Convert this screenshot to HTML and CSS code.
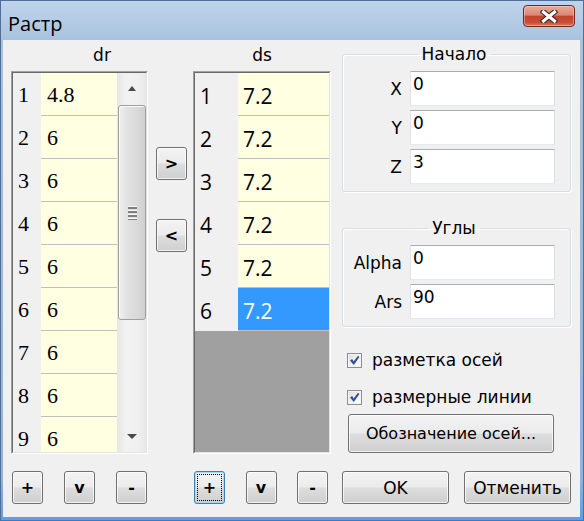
FILE: index.html
```html
<!DOCTYPE html>
<html lang="ru">
<head>
<meta charset="utf-8">
<title>Растр</title>
<link rel="stylesheet" href="styles.css">
</head>
<body>
<div class="window">
  <div class="titlebar">
    <span class="title">Растр</span>
    <button class="close" aria-label="Закрыть">
      <svg width="18" height="13" viewBox="0 0 18 13">
        <path d="M3.5 2 L14.5 11 M14.5 2 L3.5 11" stroke="#3c2420" stroke-width="5.4" stroke-linecap="square" fill="none"/>
        <path d="M3.5 2 L14.5 11 M14.5 2 L3.5 11" stroke="#ffffff" stroke-width="3.2" stroke-linecap="square" fill="none"/>
      </svg>
    </button>
  </div>
  <div class="client">
    <section class="col col-dr">
      <div class="col-head head-dr">dr</div>
      <div class="table">
        <div class="table-in">
          <div class="rows rows-dr">
            <div class="row"><span class="num">1</span><span class="val">4.8</span></div>
            <div class="row"><span class="num">2</span><span class="val">6</span></div>
            <div class="row"><span class="num">3</span><span class="val">6</span></div>
            <div class="row"><span class="num">4</span><span class="val">6</span></div>
            <div class="row"><span class="num">5</span><span class="val">6</span></div>
            <div class="row"><span class="num">6</span><span class="val">6</span></div>
            <div class="row"><span class="num">7</span><span class="val">6</span></div>
            <div class="row"><span class="num">8</span><span class="val">6</span></div>
            <div class="row row-last"><span class="num">9</span><span class="val">6</span></div>
          </div>
          <div class="scrollbar">
            <div class="sb-btn"><span class="arrow-up"></span></div>
            <div class="sb-track">
              <div class="thumb"><span class="grip"></span></div>
            </div>
            <div class="sb-btn"><span class="arrow-down"></span></div>
          </div>
        </div>
      </div>
      <div class="btn-row btn-row-dr">
        <button class="btn sm">+</button>
        <button class="btn sm">v</button>
        <button class="btn sm">-</button>
      </div>
    </section>

    <div class="mid">
      <button class="btn sm">&gt;</button>
      <button class="btn sm">&lt;</button>
    </div>

    <section class="col col-ds">
      <div class="col-head">ds</div>
      <div class="table">
        <div class="table-in">
          <div class="rows rows-ds">
            <div class="row"><span class="num">1</span><span class="val">7.2</span></div>
            <div class="row"><span class="num">2</span><span class="val">7.2</span></div>
            <div class="row"><span class="num">3</span><span class="val">7.2</span></div>
            <div class="row"><span class="num">4</span><span class="val">7.2</span></div>
            <div class="row"><span class="num">5</span><span class="val">7.2</span></div>
            <div class="row sel"><span class="num">6</span><span class="val">7.2</span></div>
          </div>
        </div>
      </div>
      <div class="btn-row btn-row-ds">
        <button class="btn sm focus">+</button>
        <button class="btn sm">v</button>
        <button class="btn sm">-</button>
      </div>
    </section>

    <div class="side">
      <fieldset class="group">
        <legend>Начало</legend>
        <div class="form">
          <label>X</label><input type="text" value="0">
          <label>Y</label><input type="text" value="0">
          <label>Z</label><input type="text" value="3">
        </div>
      </fieldset>
      <fieldset class="group group-angles">
        <legend>Углы</legend>
        <div class="form">
          <label>Alpha</label><input type="text" value="0">
          <label>Ars</label><input type="text" value="90">
        </div>
      </fieldset>
      <label class="check check-1"><span class="box"><svg width="11" height="11" viewBox="0 0 11 11"><path d="M1 5.6 L3.2 4 L4.6 6.4 L9 0.8 L10.4 2 L4.8 10 Z" fill="#2f4f9a"/></svg></span>разметка осей</label>
      <label class="check check-2"><span class="box"><svg width="11" height="11" viewBox="0 0 11 11"><path d="M1 5.6 L3.2 4 L4.6 6.4 L9 0.8 L10.4 2 L4.8 10 Z" fill="#2f4f9a"/></svg></span>размерные линии</label>
      <button class="btn axes">Обозначение осей...</button>
      <div class="ok-row">
        <button class="btn big">OK</button>
        <button class="btn big">Отменить</button>
      </div>
    </div>
  </div>
</div>
</body>
</html>
```

FILE: styles.css
```css
* { box-sizing: border-box; }
html, body { margin: 0; padding: 0; }
body {
  width: 584px;
  height: 521px;
  overflow: hidden;
  font-family: "DejaVu Sans", sans-serif;
  font-size: 17px;
  color: #000;
  background: #a6c0dc;
}
.window {
  width: 584px;
  height: 521px;
  display: flex;
  flex-direction: column;
  border: 1px solid #4f6f96;
  border-bottom-color: #2f7fd0;
  background: linear-gradient(to bottom, #bed4eb 0, #a8c2de 40px, #8fb3de 92%, #5f9ee0 100%);
}
.titlebar {
  height: 39px;
  flex: none;
  display: flex;
  justify-content: space-between;
  align-items: flex-start;
  padding-left: 7px;
}
.title {
  font-family: "Open Sans", sans-serif;
  font-size: 20px;
  line-height: 27px;
  padding-top: 9px;
  color: #000;
}
.close {
  width: 52px;
  height: 22px;
  margin-top: 4px;
  margin-right: 8px;
  padding: 0;
  border: 1px solid #6e2a1e;
  border-radius: 4px;
  background: linear-gradient(to bottom, #e9ab9b 0%, #dc8672 45%, #c5432b 52%, #c84c33 80%, #d8745e 100%);
  box-shadow: inset 0 0 0 1px rgba(255, 220, 210, 0.45);
  display: flex;
  align-items: center;
  justify-content: center;
}
.close svg { display: block; }

.client {
  flex: 1;
  margin: 0 3px 3px 2px;
  background: #f0f0f0;
  display: flex;
  padding: 0 9px 13px 8px;
}

.col { display: flex; flex-direction: column; }
.col-dr { width: 137px; }
.col-ds { width: 138px; }
.col-head {
  height: 31px;
  line-height: 31px;
  text-align: center;
}
.head-dr { padding-left: 45px; }

.table {
  height: 383px;
  border: 1px solid;
  border-color: #a0a0a0 #ffffff #ffffff #a0a0a0;
}
.table-in {
  height: 100%;
  border: 1px solid;
  border-color: #696969 #e3e3e3 #e3e3e3 #696969;
  display: flex;
  overflow: hidden;
}
.rows { display: flex; flex-direction: column; flex: none; }
.rows-dr { width: 104px; }
.rows-ds { width: 134px; background: #a0a0a0; }
.row { display: flex; height: 43px; flex: none; }
.row-last { height: 36px; }
.num {
  background: #f0f0f0;
  height: 43px;
}
.val {
  flex: 1;
  background: #ffffe1;
  border-bottom: 1px solid #c0c0c0;
  height: 43px;
}
.row-last .num, .row-last .val { height: 36px; border-bottom: 0; }
.rows-dr .num {
  width: 28px;
  font-family: "Liberation Serif", serif;
  font-size: 22px;
  line-height: 40px;
  padding: 2px 0 0 5px;
}
.rows-dr .val {
  font-family: "Liberation Serif", serif;
  font-size: 22px;
  line-height: 40px;
  padding: 2px 0 0 6px;
}
.rows-ds .num {
  width: 43px;
  font-family: "Open Sans", sans-serif;
  font-size: 21px;
  line-height: 40px;
  padding: 3px 0 0 5px;
}
.rows-ds .val {
  font-family: "Open Sans", sans-serif;
  font-size: 21px;
  line-height: 40px;
  padding: 3px 0 0 5px;
}
.row.sel .val { background: #3399ff; color: #fff; }

.scrollbar {
  width: 29px;
  flex: none;
  display: flex;
  flex-direction: column;
  background: linear-gradient(to right, #e6e6e6, #f2f2f2 30%, #f0f0f0 70%, #e8e8e8);
}
.sb-btn {
  height: 31px;
  flex: none;
  display: flex;
  align-items: center;
  justify-content: center;
}
.arrow-up {
  width: 0; height: 0;
  border-left: 4.5px solid transparent;
  border-right: 4.5px solid transparent;
  border-bottom: 5px solid #4a4a4a;
}
.arrow-down {
  width: 0; height: 0;
  border-left: 5px solid transparent;
  border-right: 5px solid transparent;
  border-top: 5px solid #4a4a4a;
}
.sb-track { flex: 1; padding-top: 1px; }
.thumb {
  height: 215px;
  margin-left: 1px;
  border: 1px solid #9f9f9f;
  border-radius: 3px;
  background: linear-gradient(to right, #f0f0f0 0, #e2e2e2 30%, #d9d9d9 70%, #cfcfcf 100%);
  box-shadow: inset 1px 1px 0 #fafafa;
  display: flex;
  align-items: center;
  justify-content: center;
}
.grip {
  width: 9px;
  height: 14px;
  background: repeating-linear-gradient(to bottom, #f8f8f8 0 1px, #7f7f7f 1px 3px, transparent 3px 4px);
}

.btn-row {
  margin-top: auto;
  height: 33px;
  display: flex;
  justify-content: space-between;
}
.btn-row-dr { padding: 0 1px; }
.btn-row-ds { padding: 0 3px 0 1px; }

.btn {
  font-family: "DejaVu Sans", sans-serif;
  font-size: 17px;
  color: #000;
  border: 1px solid #707070;
  border-radius: 3px;
  background: linear-gradient(to bottom, #f3f3f3 0%, #ebebeb 48%, #dddddd 52%, #cfcfcf 100%);
  box-shadow: inset 0 0 0 1px rgba(255, 255, 255, 0.75);
  padding: 0;
  cursor: default;
}
.btn.sm {
  width: 31px;
  height: 33px;
  font-weight: bold;
  font-size: 16px;
}
.btn.focus {
  border-color: #3c7fb1;
  box-shadow: inset 0 0 0 1px #a7d8f5;
  outline: 1px dotted #000;
  outline-offset: -4px;
}

.mid {
  width: 45px;
  display: flex;
  flex-direction: column;
  padding: 107px 0 0 8px;
  gap: 39px;
}

.side {
  width: 229px;
  margin-left: 11px;
  padding-top: 4px;
  display: flex;
  flex-direction: column;
}
.group {
  margin: 0;
  padding: 7px 15px 7px 10px;
  border: 1px solid #d5dfe5;
  border-radius: 3px;
  box-shadow: inset 1px 1px 0 #ffffff, 1px 1px 0 #ffffff;
  min-inline-size: 0;
}
.group legend {
  margin: 0 auto;
  padding: 0 4px;
  line-height: 20px;
  height: 20px;
}
.group-angles { margin-top: 26px; }
.form {
  display: grid;
  grid-template-columns: 1fr 145px;
  column-gap: 8px;
  row-gap: 4px;
  align-items: center;
}
.form label { text-align: right; }
.form input {
  width: 145px;
  height: 35px;
  font-family: "DejaVu Sans", sans-serif;
  font-size: 17px;
  color: #000;
  background: #fff;
  border: 1px solid;
  border-color: #abadb3 #dbdfe6 #e3e9ef #e2e3ea;
  padding: 2px 3px 11px 2px;
  margin: 0;
  outline: none;
}

.check {
  height: 24px;
  display: flex;
  align-items: center;
  gap: 10px;
  margin-left: 5px;
}
.check-1 { margin-top: 21px; }
.check-2 { margin-top: 13px; }
.box {
  width: 15px;
  height: 15px;
  flex: none;
  border: 1px solid #8e8f8f;
  background: linear-gradient(135deg, #dcdcdc 0%, #f4f4f4 60%, #ffffff 100%);
  box-shadow: inset 0 0 0 1px #f4f4f4;
  display: flex;
  align-items: center;
  justify-content: center;
}
.box svg { display: block; }
.btn.axes {
  margin: 5px 0 0 6px;
  width: 206px;
  height: 39px;
  font-size: 16px;
}
.ok-row {
  margin-top: auto;
  display: flex;
  justify-content: space-between;
}
.btn.big {
  width: 107px;
  height: 33px;
}
```
